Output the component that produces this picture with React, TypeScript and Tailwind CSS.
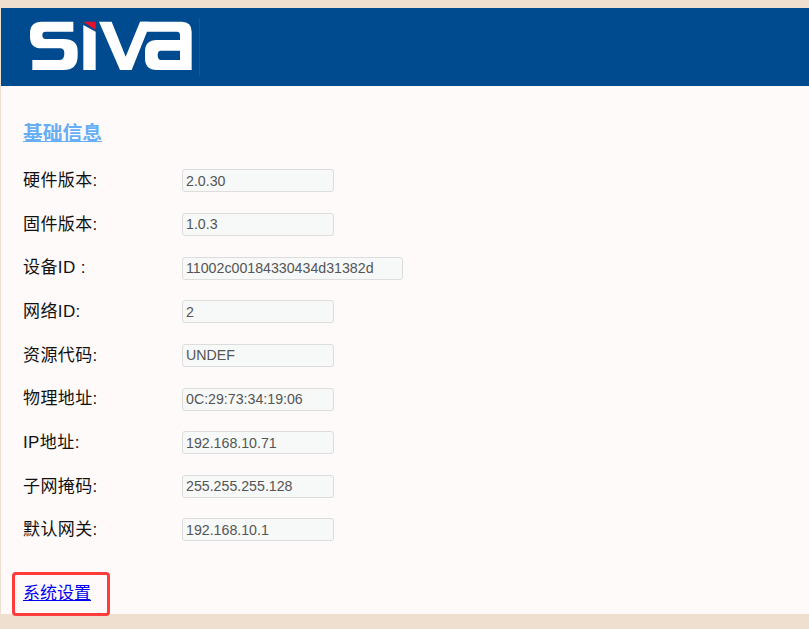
const rows = [
  { label: '硬件版本:', value: '2.0.30' },
  { label: '固件版本:', value: '1.0.3' },
  { label: '设备ID :', value: '11002c00184330434d31382d', wide: true },
  { label: '网络ID:', value: '2' },
  { label: '资源代码:', value: 'UNDEF' },
  { label: '物理地址:', value: '0C:29:73:34:19:06' },
  { label: 'IP地址:', value: '192.168.10.71' },
  { label: '子网掩码:', value: '255.255.255.128' },
  { label: '默认网关:', value: '192.168.10.1' },
];

function Logo() {
  return (
    <svg viewBox="0 0 540 186" className="w-[180px] h-[62px] block" fill="#ffffff">
      <path d="M145 20 L50 20 Q15 20 15 55 L15 65 Q15 100 50 100 L105 100 Q118 100 118 115 Q118 135 105 135 L22 135 L22 165 L115 165 Q158 165 158 122 L158 108 Q158 72 115 72 L62 72 Q52 72 52 60 Q52 50 62 50 L145 50 Z" />
      <path d="M175 30 L212 50 L212 165 L175 165 Z" />
      <path d="M175 20 L212 20 L212 45 Z" fill="#e8112d" />
      <path d="M222 20 L260 20 L302 125 L345 20 L372 20 L366 50 L320 165 L285 165 Z" />
      <path
        fillRule="evenodd"
        d="M345 20 L470 20 Q500 20 500 50 L500 165 L395 165 Q360 165 360 130 L360 110 Q360 75 395 75 L465 75 L465 60 Q465 50 455 50 L366 50 Z M408 107 Q398 107 398 120 Q398 135 408 135 L465 135 L465 107 Z"
      />
      <rect x="522" y="9" width="1.5" height="174" fill="#2a669f" />
    </svg>
  );
}

function App() {
  return (
    <div className="h-[629px] flex flex-col bg-[#efdfcf] pt-2 pl-px font-['Liberation_Sans','Noto_Sans_CJK_SC',sans-serif] overflow-hidden">
      <header className="h-[78px] shrink-0 bg-[#004a8f] pl-6 pt-[7px]">
        <Logo />
      </header>

      <main className="h-[528px] shrink-0 bg-[#fffafa] pl-[22px] pt-[32px] relative">
        <a href="#" className="text-[19.8px] leading-[30px] font-bold text-[#66aef5] underline">
          基础信息
        </a>

        <div className="mt-[11px]">
          {rows.map((row) => (
            <div key={row.label} className="flex items-center h-[43.65px]">
              <span className="w-[159px] text-[17px] tracking-[0.4px] text-[#111111]">{row.label}</span>
              <input
                readOnly
                value={row.value}
                className={`${row.wide ? 'w-[221px]' : 'w-[152px]'} h-[23px] px-[3px] text-[14.2px] text-[#555555] bg-[#f7f8f8] border border-[#dddddd] rounded-[3px] outline-none`}
              />
            </div>
          ))}
        </div>

        <a href="#" className="block mt-[29px] text-[17px] leading-[26px] text-[#0000ee] underline">
          系统设置
        </a>

        <div className="absolute left-[11px] top-[486px] w-[98px] h-[44px] border-[3px] border-[#ff3b3b] rounded-[4px]" />
      </main>
    </div>
  );
}

export default App;
